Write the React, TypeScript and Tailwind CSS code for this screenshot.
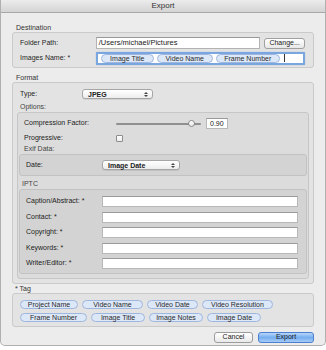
const Pill = ({ label, w }: { label: string; w: number }) => (
  <div
    className="h-[9px] rounded-full border border-[#9fb7de] bg-[#dce7f8] flex items-center justify-center text-[#2a2a2a] leading-none shrink-0"
    style={{ width: w }}
  >
    {label}
  </div>
)

const Select = ({ label, w }: { label: string; w: number }) => (
  <div
    className="h-[10px] rounded-[3px] border border-[#a6a6a6] bg-gradient-to-b from-white to-[#ededed] flex items-center justify-between pl-[5px] pr-[4px] font-bold text-[#222] leading-none shadow-[0_1px_0_rgba(0,0,0,0.08)]"
    style={{ width: w }}
  >
    <span>{label}</span>
    <svg width="4" height="7" viewBox="0 0 4 7">
      <path d="M0 3 L2 1 L4 3 Z M0 4 L2 6 L4 4 Z" fill="#444" />
    </svg>
  </div>
)

const TextBox = ({ w, value }: { w: number; value?: string }) => (
  <div
    className="h-[11px] bg-white border border-[#b8b8b8] border-t-[#9a9a9a] flex items-center pl-[3px] text-[#222] leading-none"
    style={{ width: w }}
  >
    {value}
  </div>
)

export default function App() {
  const iptc = ['Caption/Abstract: *', 'Contact: *', 'Copyright: *', 'Keywords: *', 'Writer/Editor: *']

  return (
    <div className="w-[326px] h-[350px] bg-white font-['Liberation_Sans',sans-serif] text-[7px] text-[#262626]">
      <div className="h-[346px] bg-[#ececec] rounded-b-[5px] border-x border-b border-[#b0b0b0] flex flex-col">
        {/* title bar */}
        <div className="h-[13px] bg-gradient-to-b from-[#ececec] to-[#d4d4d4] border-b border-[#a8a8a8] flex items-center justify-center text-[8px] text-[#333]">
          Export
        </div>

        <div className="pl-[11px] pr-[11px] flex flex-col">
          {/* Destination */}
          <div className="mt-[10px] h-[9px] pl-[4px] leading-[9px] text-[#333]">Destination</div>
          <div className="h-[36px] border border-[#cacaca] rounded-[3px] bg-[#e3e3e3] pt-[4px] pl-[7px] pr-[8px] flex flex-col gap-[3px]">
            <div className="h-[12px] flex items-center">
              <div className="w-[76px]">Folder Path:</div>
              <div className="w-[165px] h-[12px] bg-white border border-[#b3b3b3] border-t-[#999] flex items-center pl-[2px] text-[7.5px] text-[#222]">
                /Users/michael/Pictures
              </div>
              <div className="ml-[4px] w-[41px] h-[11px] rounded-[3px] border border-[#a0a0a0] bg-gradient-to-b from-white to-[#e8e8e8] flex items-center justify-center text-[#222]">
                Change...
              </div>
            </div>
            <div className="h-[12px] flex items-center">
              <div className="w-[76px]">Images Name: *</div>
              <div className="w-[210px] h-[13px] bg-white border-2 border-[#7aa6e0] rounded-[1px] flex items-center pl-[3px] gap-[3px] shadow-[0_0_1px_#6f9fe0]">
                <Pill label="Image Title" w={53} />
                <Pill label="Video Name" w={56} />
                <Pill label="Frame Number" w={64} />
                <div className="w-px h-[8px] bg-[#333] ml-[1px]" />
              </div>
            </div>
          </div>

          {/* Format */}
          <div className="mt-[5px] h-[9px] pl-[4px] leading-[9px] text-[#333]">Format</div>
          <div className="border border-[#cacaca] rounded-[3px] bg-[#e3e3e3] pt-[6px] pb-[4px] px-[4px] flex flex-col">
            <div className="h-[10px] flex items-center pl-[3px]">
              <div className="w-[62px]">Type:</div>
              <Select label="JPEG" w={71} />
            </div>
            <div className="mt-[3px] h-[9px] pl-[3px] leading-[9px] text-[#444]">Options:</div>
            <div className="mt-[1px] border border-[#c6c6c6] rounded-[3px] bg-[#dcdcdc] pt-[5px] pb-[4px] px-[1px] flex flex-col">
              <div className="h-[11px] flex items-center pl-[5px]">
                <div className="w-[92px] text-[#222]">Compression Factor:</div>
                <div className="relative w-[85px] h-[7px] flex items-center">
                  <div className="w-full h-[2px] rounded-full bg-[#8f8f8f]" />
                  <div className="absolute left-[72px] top-0 w-[7px] h-[7px] rounded-full bg-gradient-to-b from-white to-[#e6e6e6] border border-[#8a8a8a]" />
                </div>
                <div className="ml-[5px]">
                  <TextBox w={22} value="0.90" />
                </div>
              </div>
              <div className="mt-[4px] h-[10px] flex items-center pl-[5px]">
                <div className="w-[92px] text-[#222]">Progressive:</div>
                <div className="w-[7px] h-[7px] rounded-[1px] border border-[#8d8d8d] bg-gradient-to-b from-white to-[#ececec]" />
              </div>
              <div className="mt-[1px] h-[9px] pl-[5px] leading-[9px] text-[#444]">Exif Data:</div>
              <div className="mt-[1px] h-[22px] border border-[#c2c2c2] rounded-[3px] bg-[#d3d3d3] flex items-center pl-[6px]">
                <div className="w-[76px] text-[#222]">Date:</div>
                <Select label="Image Date" w={78} />
              </div>
              <div className="mt-[3px] h-[9px] pl-[3px] leading-[9px] text-[#444]">IPTC</div>
              <div className="mt-[1px] border border-[#c2c2c2] rounded-[3px] bg-[#d3d3d3] pt-[6px] pb-[4px] pl-[6px] flex flex-col gap-[4.5px]">
                {iptc.map(l => (
                  <div key={l} className="h-[11px] flex items-center">
                    <div className="w-[76px] text-[#222]">{l}</div>
                    <TextBox w={196} />
                  </div>
                ))}
              </div>
            </div>
          </div>

          {/* Tag */}
          <div className="h-[9px] pl-[3px] leading-[9px] text-[#333]">* Tag</div>
          <div className="h-[34px] border border-[#cacaca] rounded-[3px] bg-[#e3e3e3] pt-[5px] pl-[7px] flex flex-col gap-[3px]">
            <div className="flex gap-[4px] h-[10px] items-center">
              <Pill label="Project Name" w={58} />
              <Pill label="Video Name" w={61} />
              <Pill label="Video Date" w={51} />
              <Pill label="Video Resolution" w={71} />
            </div>
            <div className="flex gap-[4px] h-[10px] items-center">
              <Pill label="Frame Number" w={67} />
              <Pill label="Image Title" w={54} />
              <Pill label="Image Notes" w={54} />
              <Pill label="Image Date" w={54} />
            </div>
          </div>

          {/* buttons */}
          <div className="mt-[5px] flex justify-end gap-[5px]">
            <div className="w-[39px] h-[11px] rounded-[3px] border border-[#9c9c9c] bg-gradient-to-b from-white to-[#e9e9e9] flex items-center justify-center text-[#222]">
              Cancel
            </div>
            <div className="w-[56px] h-[11px] rounded-[3px] border border-[#4b7fcf] bg-gradient-to-b from-[#b7d6fa] via-[#76aef0] to-[#a6cbf6] flex items-center justify-center text-[#1a1a1a]">
              Export
            </div>
          </div>
        </div>
      </div>
    </div>
  )
}
